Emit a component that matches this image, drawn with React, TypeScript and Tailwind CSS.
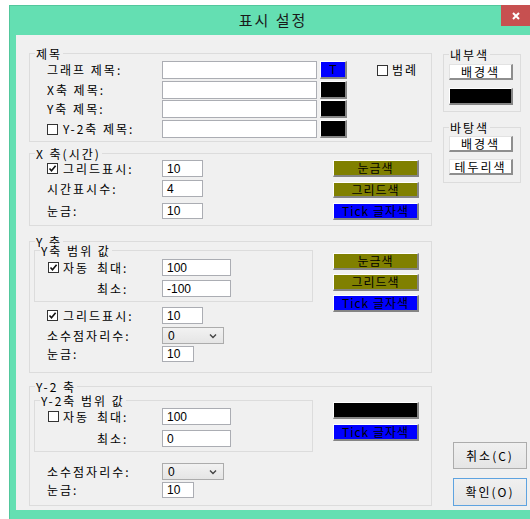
import type { ReactNode } from 'react';

const KR = "font-['Noto_Sans_CJK_KR','Noto_Sans_CJK_SC',sans-serif]";
const NUM = "font-['Liberation_Sans','Noto_Sans_CJK_KR',sans-serif] tracking-normal";

function Check({ checked = false }: { checked?: boolean }) {
  return (
    <span className="w-[11px] h-[11px] border border-[#333] bg-white flex items-center justify-center shrink-0">
      {checked && (
        <svg width="9" height="9" viewBox="0 0 9 9">
          <path d="M1.5 4.5 L3.5 6.8 L7.6 1.8" fill="none" stroke="#111" strokeWidth="1.6" />
        </svg>
      )}
    </span>
  );
}

function TextBox({ value = '', w, h }: { value?: string; w: string; h: string }) {
  return (
    <div className={`${w} ${h} border border-[#abadb3] bg-white flex items-center pl-[4px] text-[12px] ${NUM} text-black`}>
      {value}
    </div>
  );
}

function Combo({ value }: { value: string }) {
  return (
    <div className={`w-[62px] h-[17px] border border-[#acacac] bg-gradient-to-b from-[#f2f2f2] to-[#e5e5e5] flex items-center justify-between pl-[5px] pr-[6px] text-[12px] ${NUM}`}>
      <span>{value}</span>
      <svg width="8" height="6" viewBox="0 0 8 6">
        <path d="M1 1.5 L4 4.5 L7 1.5" fill="none" stroke="#444" strokeWidth="1.4" />
      </svg>
    </div>
  );
}

// owner-drawn colour buttons with the old raised edge
function ColorBtn({ label = '', bg, w = 'w-[86px]', h = 'h-[17px]', className = '' }: any) {
  return (
    <div
      className={`${w} ${h} ${bg} ${className} border-t border-l border-t-white border-l-white border-r-2 border-b-2 border-r-[#858585] border-b-[#858585] flex items-center justify-center whitespace-nowrap text-[12px] leading-none tracking-[1px] text-black`}
    >
      {label}
    </div>
  );
}

function WhiteBtn({ label, className = '' }: { label: string; className?: string }) {
  return (
    <div
      className={`w-[64px] h-[16px] ml-[5px] bg-white ${className} border-t border-l border-t-[#e2e2e2] border-l-[#e2e2e2] border-r-2 border-b-2 border-r-[#8e8e8e] border-b-[#8e8e8e] flex items-center justify-center text-[12px] leading-none`}
    >
      {label}
    </div>
  );
}

function Group({ label, className = '', children }: { label: string; className?: string; children: ReactNode }) {
  return (
    <div className={`border border-[#dcdcdc] ${className}`}>
      <div className="-mt-[7px] ml-[5px] w-fit px-[1px] bg-[#f0f0f0] leading-[13px]">{label}</div>
      {children}
    </div>
  );
}

function TitleRow({ label, check, className, swatch, children }: any) {
  return (
    <div className={`flex items-center h-[18px] ${className}`}>
      <div className="w-[132px] pl-[17px] flex items-center gap-[5px]">
        {check}
        <span>{label}</span>
      </div>
      <TextBox w="w-[155px]" h="h-[18px]" />
      <ColorBtn bg={swatch} w="w-[27px]" h="h-[18px]" className="ml-[3px]" label={swatch === 'bg-[#0000ff]' ? <span className={NUM}>T</span> : ''} />
      {children}
    </div>
  );
}

function Row({ label, check, className = '', h = 'h-[17px]', children }: any) {
  return (
    <div className={`flex items-center ${h} ${className}`}>
      <div className="w-[132px] pl-[17px] flex items-center gap-[5px]">
        {check}
        <span>{label}</span>
      </div>
      {children}
    </div>
  );
}

function RangeRows({ auto, max, min, first = 'mt-[2px]', second = 'mt-[4px]' }: any) {
  return (
    <>
      <div className={`flex items-center h-[17px] ${first}`}>
        <div className="w-[127px] pl-[13px] flex items-center">
          <div className="w-[49px] flex items-center gap-[4px]">
            <Check checked={auto} />
            <span>자동</span>
          </div>
          <span>최대:</span>
        </div>
        <TextBox w="w-[69px]" h="h-[17px]" value={max} />
      </div>
      <div className={`flex items-center h-[17px] ${second}`}>
        <div className="w-[127px] pl-[62px]">최소:</div>
        <TextBox w="w-[69px]" h="h-[17px]" value={min} />
      </div>
    </>
  );
}

export default function App() {
  return (
    <div className={`w-[530px] h-[519px] bg-white overflow-hidden whitespace-nowrap ${KR} text-[12px] tracking-[2px] text-black`}>
      <div className="ml-[9px] mt-[5px] w-[528px] h-[516px] bg-[#64dfb2] border border-[#52c79c]">
        {/* title bar */}
        <div className="relative h-[29px] flex items-center justify-center text-[15px] text-[#1a1a1a]">
          표시 설정
          <div className="absolute top-[-1px] right-[5px] w-[30px] h-[21px] bg-[#c75050] flex items-center justify-center">
            <svg width="8" height="8" viewBox="0 0 8 8">
              <path d="M1 1 L7 7 M7 1 L1 7" stroke="white" strokeWidth="2" />
            </svg>
          </div>
        </div>

        <div className="ml-[6px] w-[514px] h-[475px] bg-[#f0f0f0] flex pl-[13px]">
          {/* left column */}
          <div className="w-[403px] flex flex-col">
            <Group label="제목" className="mt-[18px] pb-[3px]">
              <TitleRow label="그래프 제목:" className="mt-[1px]" swatch="bg-[#0000ff]">
                <div className="ml-[30px] flex items-center gap-[4px]">
                  <Check />
                  <span>범례</span>
                </div>
              </TitleRow>
              <TitleRow label="X축 제목:" className="mt-[2px]" swatch="bg-black" />
              <TitleRow label="Y축 제목:" className="mt-[1px]" swatch="bg-black" />
              <TitleRow label="Y-2축 제목:" className="mt-[2px]" swatch="bg-black" check={<Check />} />
            </Group>

            <Group label="X 축(시간)" className="mt-[11px] pb-[5px]">
              <div className="flex">
                <div className="flex flex-col">
                  <Row label="그리드표시:" check={<Check checked />}>
                    <TextBox w="w-[41px]" h="h-[17px]" value="10" />
                  </Row>
                  <Row label="시간표시수:" className="mt-[3px]">
                    <TextBox w="w-[41px]" h="h-[17px]" value="4" />
                  </Row>
                  <Row label="눈금:" className="mt-[6px]" h="h-[16px]">
                    <TextBox w="w-[41px]" h="h-[16px]" value="10" />
                  </Row>
                </div>
                <div className="ml-auto mr-[12px] flex flex-col">
                  <ColorBtn label="눈금색" bg="bg-[#808000]" />
                  <ColorBtn label="그리드색" bg="bg-[#808000]" h="h-[16px]" className="mt-[5px]" />
                  <ColorBtn label="Tick 글자색" bg="bg-[#0000ff]" className="mt-[5px]" />
                </div>
              </div>
            </Group>

            <Group label="Y 축" className="mt-[15px] pb-[10px]">
              <div className="flex">
                <div className="flex flex-col">
                  <Group label="Y축 범위 값" className="ml-[4px] mt-[2px] w-[279px] pb-[4px]">
                    <RangeRows auto max="100" min="-100" />
                  </Group>
                  <Row label="그리드표시:" check={<Check checked />} className="mt-[5px]">
                    <TextBox w="w-[41px]" h="h-[17px]" value="10" />
                  </Row>
                  <Row label="소수점자리수:" className="mt-[3px]">
                    <Combo value="0" />
                  </Row>
                  <Row label="눈금:" className="mt-[2px]" h="h-[16px]">
                    <TextBox w="w-[32px]" h="h-[16px]" value="10" />
                  </Row>
                </div>
                <div className="ml-auto mr-[12px] flex flex-col">
                  <ColorBtn label="눈금색" bg="bg-[#808000]" className="mt-[5px]" />
                  <ColorBtn label="그리드색" bg="bg-[#808000]" className="mt-[4px]" />
                  <ColorBtn label="Tick 글자색" bg="bg-[#0000ff]" className="mt-[4px]" />
                </div>
              </div>
            </Group>

            <Group label="Y-2 축" className="mt-[13px] pb-[7px]">
              <div className="flex">
                <div className="flex flex-col">
                  <Group label="Y-2축 범위 값" className="ml-[4px] mt-[7px] w-[279px] pb-[4px]">
                    <RangeRows auto={false} max="100" min="0" first="mt-[1px]" second="mt-[5px]" />
                  </Group>
                  <Row label="소수점자리수:" className="mt-[11px]">
                    <Combo value="0" />
                  </Row>
                  <Row label="눈금:" className="mt-[2px]" h="h-[16px]">
                    <TextBox w="w-[32px]" h="h-[16px]" value="10" />
                  </Row>
                </div>
                <div className="ml-auto mr-[12px] flex flex-col">
                  <ColorBtn bg="bg-black" className="mt-[9px]" />
                  <ColorBtn label="Tick 글자색" bg="bg-[#0000ff]" className="mt-[5px]" />
                </div>
              </div>
            </Group>
          </div>

          {/* right column */}
          <div className="ml-[11px] flex-1 flex flex-col">
            <Group label="내부색" className="mt-[19px] w-[78px] pb-[6px]">
              <WhiteBtn label="배경색" className="mt-[3px]" />
              <ColorBtn bg="bg-black" w="w-[64px]" className="ml-[5px] mt-[8px]" />
            </Group>
            <Group label="바탕색" className="mt-[15px] w-[78px] pb-[7px]">
              <WhiteBtn label="배경색" className="mt-[2px]" />
              <WhiteBtn label="테두리색" className="mt-[7px]" />
            </Group>

            <div className="mt-auto mb-[4px] ml-[10px] flex flex-col gap-[9px]">
              <div className="w-[74px] h-[27px] border border-[#acacac] bg-gradient-to-b from-[#f0f0f0] to-[#e5e5e5] flex items-center justify-center text-[12px]">
                취소(C)
              </div>
              <div className="w-[74px] h-[28px] border border-[#5ea3e0] bg-gradient-to-b from-[#f0f0f0] to-[#e5e5e5] flex items-center justify-center text-[12px]">
                확인(O)
              </div>
            </div>
          </div>
        </div>
      </div>
    </div>
  );
}
